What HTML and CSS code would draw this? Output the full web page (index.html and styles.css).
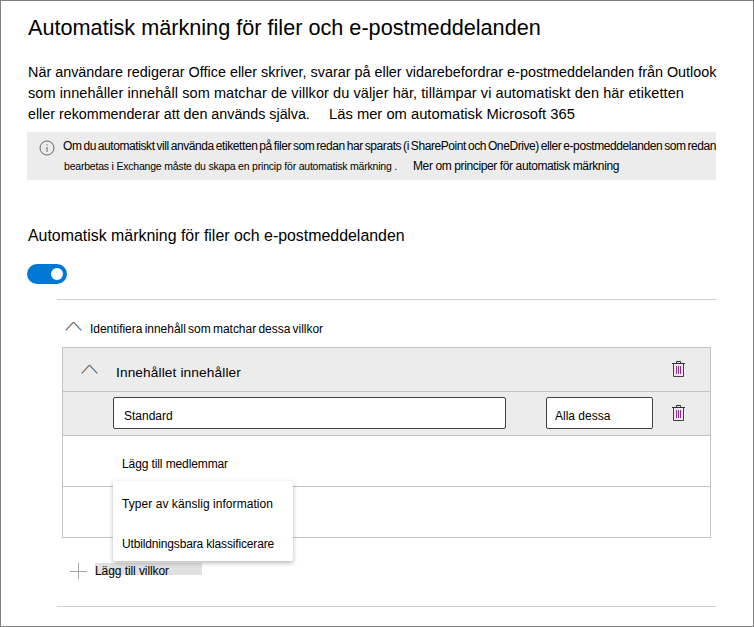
FILE: index.html
```
<!DOCTYPE html>
<html lang="sv">
<head>
<meta charset="utf-8">
<title>Automatisk märkning</title>
<link rel="stylesheet" href="styles.css">
</head>
<body>
<main class="page">
  <h1 class="title">Automatisk märkning för filer och e-postmeddelanden</h1>
  <div class="intro">
    <p class="line line-a">När användare redigerar Office eller skriver, svarar på eller vidarebefordrar e-postmeddelanden från Outlook</p>
    <p class="line line-b">som innehåller innehåll som matchar de villkor du väljer här, tillämpar vi automatiskt den här etiketten</p>
    <p class="line line-c"><span class="line-c-text">eller rekommenderar att den används själva.</span><a class="learn">Läs mer om automatisk Microsoft 365</a></p>
  </div>
  <div class="info">
    <svg class="info-icon" width="16" height="16" viewBox="0 0 16 16" fill="none" stroke="#666"><circle cx="8" cy="8" r="7"/><path d="M8 7v5M8 4.3v1.2"/></svg>
    <div class="info-text">
      <p class="info-a">Om du automatiskt vill använda etiketten på filer som redan har sparats (i SharePoint och OneDrive) eller e-postmeddelanden som redan</p>
      <p class="info-b"><span class="info-b-text">bearbetas i Exchange måste du skapa en princip för automatisk märkning .</span><a class="info-link">Mer om principer för automatisk märkning</a></p>
    </div>
  </div>
  <h2 class="subtitle">Automatisk märkning för filer och e-postmeddelanden</h2>
  <div class="toggle"><span class="knob"></span></div>
  <section class="conditions">
    <div class="group-head">
      <svg class="chevron" width="17" height="10" viewBox="0 0 17 10" fill="none" stroke-width="1.2"><path d="M.7 9.300L8.5 1.200" stroke="#80604a"/><path d="M8.5 1.200L16.3 9.300" stroke="#4a6c8c"/></svg>
      <span class="group-title">Identifiera innehåll som matchar dessa villkor</span>
    </div>
    <div class="table">
      <div class="row row-head">
        <svg class="chevron" width="17" height="10" viewBox="0 0 17 10" fill="none" stroke-width="1.2"><path d="M.7 9.300L8.5 1.200" stroke="#80604a"/><path d="M8.5 1.200L16.3 9.300" stroke="#4a6c8c"/></svg>
        <span class="row-title">Innehållet innehåller</span>
        <svg class="trash" width="13" height="17" viewBox="0 0 13 17" fill="none"><path d="M1.5 3v12.500h10V3" stroke="#404048"/><path d="M0 2.500h13M4.500 2V.5h4V2" stroke="#303038"/><path d="M4.500 5v8M6.500 5v8M8.500 5v8" stroke="#93278f"/></svg>
      </div>
      <div class="row row-fields">
        <div class="field field-name">Standard</div>
        <div class="field field-match">Alla dessa</div>
        <svg class="trash" width="13" height="17" viewBox="0 0 13 17" fill="none"><path d="M1.5 3v12.500h10V3" stroke="#404048"/><path d="M0 2.500h13M4.500 2V.5h4V2" stroke="#303038"/><path d="M4.500 5v8M6.500 5v8M8.500 5v8" stroke="#93278f"/></svg>
      </div>
      <div class="row row-add">
        <span class="add-label">Lägg till medlemmar</span>
        <div class="menu">
          <div class="menu-item types">Typer av känslig information</div>
          <div class="menu-item classifiers">Utbildningsbara klassificerare</div>
        </div>
      </div>
      <div class="row row-empty"></div>
    </div>
    <div class="add-condition">
      <svg width="17" height="17" viewBox="0 0 17 17" stroke="#a6a6a6"><path d="M8.500 0v16M0 8.500h17"/></svg>
      <span class="add-condition-label">Lägg till villkor</span>
    </div>
  </section>
</main>
</body>
</html>
```
FILE: styles.css
```
* { box-sizing: border-box; }
body { margin: 0; background: #fff; color: #000; font-family: "Liberation Sans", Arial, sans-serif; }
h1, h2, p { margin: 0; font-weight: 400; white-space: nowrap; }
svg { display: block; flex: none; }

.page { width: 754px; height: 627px; border: 1px solid #7f7f7f; padding: 12px 37px 0 26px; overflow: hidden; }
.title { margin-left: 1px; font-size: 21.67px; line-height: 30px; }
.intro { margin: 19px 0 0 1px; }
.line { height: 21px; line-height: 21px; }
.line-a { font-size: 14.39px; }
.line-b { font-size: 14.5px; letter-spacing: .077px; }
.line-c { display: flex; font-size: 14.29px; }
.line-c-text { width: 301px; }
.learn { font-size: 14.75px; }

.info { display: flex; height: 48px; margin-top: 7px; padding: 4px 0 0 12px; background: #ececec; }
.info-icon { margin-top: 4px; }
.info-text { margin-left: 8px; font-size: 12px; line-height: 20px; }
.info-a { letter-spacing: -.418px; word-spacing: -1px; }
.info-b { display: flex; margin-left: 1px; }
.info-b-text { width: 349px; font-size: 10.5px; letter-spacing: -.206px; }
.info-link { letter-spacing: -.385px; }

.subtitle { margin: 45px 0 0 1px; font-size: 15.92px; line-height: 22px; }
.toggle { display: flex; align-items: center; justify-content: flex-end; width: 40px; height: 20px; margin-top: 17px; padding-right: 4px; border-radius: 10px; background: #0078d4; }
.knob { width: 12px; height: 12px; border-radius: 50%; background: #fff; }

.conditions { height: 308px; margin: 15px 0 0 30px; border-top: 1px solid #d0d0d0; border-bottom: 1px solid #d0d0d0; }
.group-head { display: flex; height: 47px; padding: 21px 0 0 8px; }
.group-title { margin-left: 8px; font-size: 12px; line-height: 16px; letter-spacing: -.03px; word-spacing: -1px; }

.table { width: 649px; margin-left: 5px; border: 1px solid #c4c4c4; }
.row { display: flex; }
.row + .row { border-top: 1px solid #c4c4c4; }
.row-head { height: 43px; background: #ececec; padding: 16px 25px 0 18px; }
.row-title { flex: 1; margin-left: 18px; font-size: 13.7px; letter-spacing: .115px; line-height: 18px; }
.row-head .trash { margin-top: -3px; }
.row-fields { height: 44px; padding: 5px 25px 0 50px; background: #ececec; }
.field { height: 32px; border: 1px solid #404040; border-radius: 2px; background: #fff; font-size: 12px; line-height: 16px; }
.field-name { width: 393px; padding: 10px 0 0 10px; }
.field-match { width: 107px; margin: 0 auto 0 40px; padding: 10px 0 0 8px; }
.row-fields .trash { margin-top: 8px; }
.row-add { position: relative; height: 51px; padding: 20px 0 0 59px; }
.add-label { font-size: 12px; line-height: 16px; letter-spacing: -.107px; }
.menu { position: absolute; left: 50px; top: 45px; width: 180px; height: 80px; padding-left: 9px; border-radius: 2px; background: #fff; box-shadow: 0 2px 5px rgba(0, 0, 0, .28); }
.menu-item { height: 40px; font-size: 12px; line-height: 46px; white-space: nowrap; }
.types { letter-spacing: .057px; }
.classifiers { letter-spacing: -.158px; }
.row-empty { height: 51px; }

.add-condition { display: flex; margin: 25px 0 0 13px; }
.add-condition-label { width: 107px; height: 12px; margin-left: 8px; background: #e1e1e1; font-size: 12px; line-height: 17px; letter-spacing: -.08px; }
```
